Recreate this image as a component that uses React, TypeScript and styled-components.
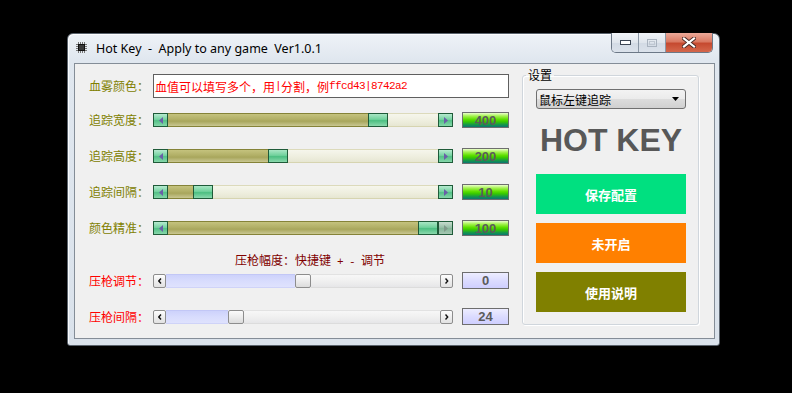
import React from 'react';
import styled, { createGlobalStyle, css } from 'styled-components';

const GlobalStyle = createGlobalStyle`
  html, body {
    margin: 0;
    padding: 0;
    background: #000;
  }
  body {
    width: 792px;
    height: 393px;
    overflow: hidden;
    font-family: "Noto Sans CJK SC", sans-serif;
  }
`;

const Desktop = styled.div`
  width: 792px;
  height: 393px;
  box-sizing: border-box;
  padding: 33px 0 0 67px;
  background: #000;
`;

const Window = styled.div`
  width: 653px;
  height: 313px;
  box-sizing: border-box;
  display: flex;
  flex-direction: column;
  padding: 0 4px 6px 6px;
  border: 1px solid #59626c;
  border-radius: 6px 6px 3px 3px;
  background: linear-gradient(#eef2f7, #e0e7ef 26px, #dae2eb);
  box-shadow: inset 1px 1px 0 rgba(255, 255, 255, 0.8);
`;

const TitleBar = styled.div`
  height: 29px;
  display: flex;
  align-items: flex-start;
`;

const AppIcon = styled.svg`
  margin: 8px 0 0 2px;
  flex: none;
`;

const TitleText = styled.div`
  margin: 6px 0 0 9px;
  font-family: "Noto Sans", sans-serif;
  font-size: 12.5px;
  line-height: 17px;
  color: #000;
  white-space: pre;
`;

const CaptionGroup = styled.div`
  margin: -1px 2px 0 auto;
  display: flex;
  height: 19px;
  border: 1px solid #6c7887;
  border-top: none;
  border-radius: 0 0 5px 5px;
  overflow: hidden;
`;

const CaptionButton = styled.div<{ $close?: boolean }>`
  width: ${(p) => (p.$close ? 46 : 26)}px;
  display: flex;
  align-items: center;
  justify-content: center;
  ${(p) =>
    p.$close
      ? css`
          background: linear-gradient(#eba999, #da7a63 45%, #c64a30 55%, #d4674c);
        `
      : css`
          background: linear-gradient(#f1f4f8, #dfe5ec 50%, #d2dae4 50%, #dbe2eb);
          border-right: 1px solid #8c98a6;
        `}
`;

const Client = styled.div`
  flex: 1;
  display: flex;
  align-items: flex-start;
  border: 1px solid #848d97;
  background: #f0f0f0;
`;

const LeftPanel = styled.div`
  display: flex;
  flex-direction: column;
  padding: 10px 0 0 14px;
`;

const Row = styled.div<{ $h: number }>`
  height: ${(p) => p.$h}px;
  display: grid;
  grid-template-columns: 55px 300px 47px;
  column-gap: 9px;
  align-items: center;
`;

const Label = styled.span<{ $tone: 'olive' | 'red' }>`
  font-size: 12px;
  line-height: 14px;
  white-space: nowrap;
  color: ${(p) => (p.$tone === 'olive' ? '#808000' : '#ff0000')};
`;

/* half-width latin run, like the bitmap font of the original */
const Half = styled.span`
  font-family: "Liberation Mono", monospace;
  font-size: 11px;
  letter-spacing: -0.6px;
`;

const TextInput = styled.div`
  grid-column: 2 / 4;
  height: 24px;
  box-sizing: border-box;
  border: 1px solid #5f5f5f;
  background: #fff;
  padding-left: 1px;
  display: flex;
  align-items: center;
  font-size: 12px;
  color: #ff0000;
  white-space: pre;
`;

const Note = styled.div`
  grid-column: 1 / 4;
  align-self: end;
  padding-left: 146px;
  font-size: 12px;
  line-height: 20px;
  color: #800000;
  white-space: pre;
`;

/* ---- scroll bars ---- */

type Kind = 'gel' | 'plain';

const Bar = styled.div`
  display: flex;
  height: 14px;
  width: 300px;
`;

const ArrowButton = styled.div<{ $kind: Kind; $off?: boolean }>`
  flex: none;
  box-sizing: border-box;
  height: 14px;
  display: flex;
  align-items: center;
  justify-content: center;
  ${(p) =>
    p.$kind === 'gel'
      ? css`
          width: 15px;
          border: 1px solid #1f5b39;
          background: ${p.$off
            ? 'linear-gradient(#c7dccf, #98c0a8 45%, #86b699 55%, #a7c8b4)'
            : 'linear-gradient(#b6ead0, #77d3a2 45%, #54c187 55%, #86d7aa)'};
        `
      : css`
          width: 13px;
          border: 1px solid #8d8d8d;
          border-radius: 2px;
          background: linear-gradient(#fefefe, #eeeeee 50%, #e2e2e2);
        `}
`;

const Filled = styled.div<{ $kind: Kind }>`
  flex: none;
  box-sizing: border-box;
  height: 14px;
  ${(p) =>
    p.$kind === 'gel'
      ? css`
          border-top: 1px solid #858338;
          border-bottom: 1px solid #858338;
          background: linear-gradient(#c4c27e, #b1af66 45%, #a8a65c 60%, #c9c792);
        `
      : css`
          border-top: 1px solid #c2c7f6;
          border-bottom: 1px solid #cfd3f8;
          background: linear-gradient(#cdd2fb, #d8dcfd 50%, #dfe2fd);
        `}
`;

const Thumb = styled.div<{ $kind: Kind }>`
  flex: none;
  box-sizing: border-box;
  height: 14px;
  ${(p) =>
    p.$kind === 'gel'
      ? css`
          width: 20px;
          border: 1px solid #1f5b39;
          background: linear-gradient(#a9e6c4, #70d19c 45%, #4dbf82 55%, #8bd9ad);
        `
      : css`
          width: 16px;
          border: 1px solid #8d8d8d;
          border-radius: 2px;
          background: linear-gradient(#fbfbfb, #ececec 50%, #dcdcdc);
        `}
`;

const Rest = styled.div<{ $kind: Kind }>`
  flex: 1;
  box-sizing: border-box;
  height: 14px;
  ${(p) =>
    p.$kind === 'gel'
      ? css`
          border-top: 1px solid #dcdabb;
          border-bottom: 1px solid #d6d4b0;
          background: linear-gradient(#f6f6ec, #efefe0 50%, #e6e6d2);
        `
      : css`
          border-top: 1px solid #e2e2e2;
          border-bottom: 1px solid #dcdcdc;
          background: linear-gradient(#f7f7f7, #f0f0f0 50%, #e6e6e8);
        `}
`;

const ValueBox = styled.div<{ $kind: Kind }>`
  box-sizing: border-box;
  height: ${(p) => (p.$kind === 'gel' ? 16 : 17)}px;
  border: 1px solid #6e6e6e;
  display: flex;
  align-items: center;
  justify-content: center;
  font-family: "Liberation Sans", Arial, sans-serif;
  font-weight: bold;
  font-size: 13px;
  color: #5b5b5b;
  background: ${(p) =>
    p.$kind === 'gel'
      ? 'linear-gradient(#eaffcc 0%, #a4f24e 22%, #5ee000 45%, #38c800 62%, #169a46 82%, #0b7673 100%)'
      : 'linear-gradient(#ededff, #dcdcff 50%, #cfcfff)'};
`;

const Arrow = ({ kind, dir, off }: { kind: Kind; dir: 'l' | 'r'; off?: boolean }) => {
  if (kind === 'plain') {
    const d = dir === 'l' ? 'M3 0.5 L0.8 3 L3 5.5' : 'M0.5 0.5 L2.7 3 L0.5 5.5';
    return (
      <svg width={4} height={6} viewBox="0 0 4 6">
        <path d={d} fill="none" stroke="#111" strokeWidth={1.4} />
      </svg>
    );
  }
  const pts = dir === 'l' ? '4,0 4,7 0,3.5' : '0,0 0,7 4,3.5';
  return (
    <svg width={4} height={7} viewBox="0 0 4 7">
      <polygon points={pts} fill={off ? '#7f9a8a' : '#6a5fa8'} />
    </svg>
  );
};

const ScrollBar = ({ kind, value, min, max, offRight }: { kind: Kind; value: number; min: number; max: number; offRight?: boolean }) => {
  const btn = kind === 'gel' ? 15 : 13;
  const thumb = kind === 'gel' ? 20 : 16;
  const range = 300 - btn * 2 - thumb;
  const pos = Math.round(((value - min) / (max - min)) * range);
  return (
    <Bar>
      <ArrowButton $kind={kind}>
        <Arrow kind={kind} dir="l" />
      </ArrowButton>
      <Filled $kind={kind} style={{ width: pos }} />
      <Thumb $kind={kind} />
      <Rest $kind={kind} />
      <ArrowButton $kind={kind} $off={offRight}>
        <Arrow kind={kind} dir="r" off={offRight} />
      </ArrowButton>
    </Bar>
  );
};

/* ---- settings group ---- */

const Group = styled.fieldset`
  margin: 4px 0 0 13px;
  padding: 7px 12px 0 13px;
  width: 177px;
  height: 257px;
  box-sizing: border-box;
  border: 1px solid #d0d6dc;
  border-radius: 3px;
  box-shadow: inset 1px 1px 0 #fff, 1px 1px 0 #fff;
  display: flex;
  flex-direction: column;
  align-items: center;
`;

const Legend = styled.legend`
  margin-left: -10px;
  padding: 0 2px;
  font-size: 12px;
  line-height: 14px;
  color: #000;
`;

const Combo = styled.div`
  width: 150px;
  height: 20px;
  box-sizing: border-box;
  border: 1px solid #707070;
  border-radius: 3px;
  background: linear-gradient(#f3f3f3, #ebebeb 50%, #dddddd 50%, #d0d0d0);
  display: flex;
  align-items: center;
  padding: 0 6px 0 2px;
  font-size: 12px;
  color: #000;
`;

const ComboText = styled.span`
  flex: 1;
`;

const Brand = styled.div`
  margin-top: 13px;
  font-family: "Liberation Sans", Arial, sans-serif;
  font-weight: bold;
  font-size: 32px;
  line-height: 36px;
  color: #585858;
  white-space: nowrap;
`;

const Actions = styled.div`
  margin-top: 16px;
  display: flex;
  flex-direction: column;
  gap: 9px;
`;

const ActionButton = styled.div<{ $bg: string }>`
  width: 150px;
  height: 40px;
  display: flex;
  align-items: center;
  justify-content: center;
  background: ${(p) => p.$bg};
  color: #fff;
  font-size: 13px;
  font-weight: bold;
`;

const gelRows = [
  { label: '追踪宽度：', value: 400, max: 500 },
  { label: '追踪高度：', value: 200, max: 500 },
  { label: '追踪间隔：', value: 10, max: 100 },
  { label: '颜色精准：', value: 100, max: 100 },
];

export default function App() {
  return (
    <>
      <GlobalStyle />
      <Desktop>
        <Window>
          <TitleBar>
            <AppIcon width={11} height={11} viewBox="0 0 11 11">
              <rect x={2} y={2} width={7} height={7} fill="#111" />
              <rect x={3} y={3} width={5} height={5} fill="#3a3a3a" />
              {[2, 4, 6, 8].map((v) => (
                <g key={v} fill="#777">
                  <rect x={v} y={0} width={1} height={2} />
                  <rect x={v} y={9} width={1} height={2} />
                  <rect x={0} y={v} width={2} height={1} />
                  <rect x={9} y={v} width={2} height={1} />
                </g>
              ))}
            </AppIcon>
            <TitleText>Hot Key  -  Apply to any game  Ver1.0.1</TitleText>
            <CaptionGroup>
              <CaptionButton>
                <svg width={11} height={5} viewBox="0 0 11 5">
                  <rect x={0.5} y={0.5} width={10} height={4} fill="#fff" stroke="#3c4654" />
                </svg>
              </CaptionButton>
              <CaptionButton>
                <svg width={10} height={8} viewBox="0 0 10 8">
                  <rect x={0.5} y={0.5} width={9} height={7} fill="none" stroke="#a9b3bf" />
                  <rect x={2.5} y={2.5} width={5} height={3} fill="none" stroke="#bfc7d1" />
                </svg>
              </CaptionButton>
              <CaptionButton $close>
                <svg width={14} height={11} viewBox="0 0 14 11">
                  <path d="M2 1.5 L12 9.5 M12 1.5 L2 9.5" stroke="#4a2a26" strokeWidth={4} strokeLinecap="square" />
                  <path d="M2 1.5 L12 9.5 M12 1.5 L2 9.5" stroke="#fff" strokeWidth={2.2} strokeLinecap="square" />
                </svg>
              </CaptionButton>
            </CaptionGroup>
          </TitleBar>
          <Client>
            <LeftPanel>
              <Row $h={24} style={{ marginBottom: 4 }}>
                <Label $tone="olive">血雾颜色：</Label>
                <TextInput>
                  血值可以填写多个，用<Half>|</Half>分割，例<Half>ffcd43|8742a2</Half>
                </TextInput>
              </Row>
              {gelRows.map((r) => (
                <Row $h={36} key={r.label}>
                  <Label $tone="olive">{r.label}</Label>
                  <ScrollBar kind="gel" value={r.value} min={0} max={r.max} offRight={r.value === r.max} />
                  <ValueBox $kind="gel">{r.value}</ValueBox>
                </Row>
              ))}
              <Row $h={26}>
                <Note>
                  压枪幅度：快捷键<Half> + - </Half>调节
                </Note>
              </Row>
              <Row $h={17}>
                <Label $tone="red">压枪调节：</Label>
                <ScrollBar kind="plain" value={0} min={-50} max={50} />
                <ValueBox $kind="plain">0</ValueBox>
              </Row>
              <Row $h={17} style={{ marginTop: 19 }}>
                <Label $tone="red">压枪间隔：</Label>
                <ScrollBar kind="plain" value={24} min={0} max={100} />
                <ValueBox $kind="plain">24</ValueBox>
              </Row>
            </LeftPanel>
            <Group>
              <Legend>设置</Legend>
              <Combo>
                <ComboText>鼠标左键追踪</ComboText>
                <svg width={7} height={4} viewBox="0 0 7 4">
                  <polygon points="0,0 7,0 3.5,4" fill="#000" />
                </svg>
              </Combo>
              <Brand>HOT KEY</Brand>
              <Actions>
                <ActionButton $bg="#00e080">保存配置</ActionButton>
                <ActionButton $bg="#ff8000">未开启</ActionButton>
                <ActionButton $bg="#808000">使用说明</ActionButton>
              </Actions>
            </Group>
          </Client>
        </Window>
      </Desktop>
    </>
  );
}
